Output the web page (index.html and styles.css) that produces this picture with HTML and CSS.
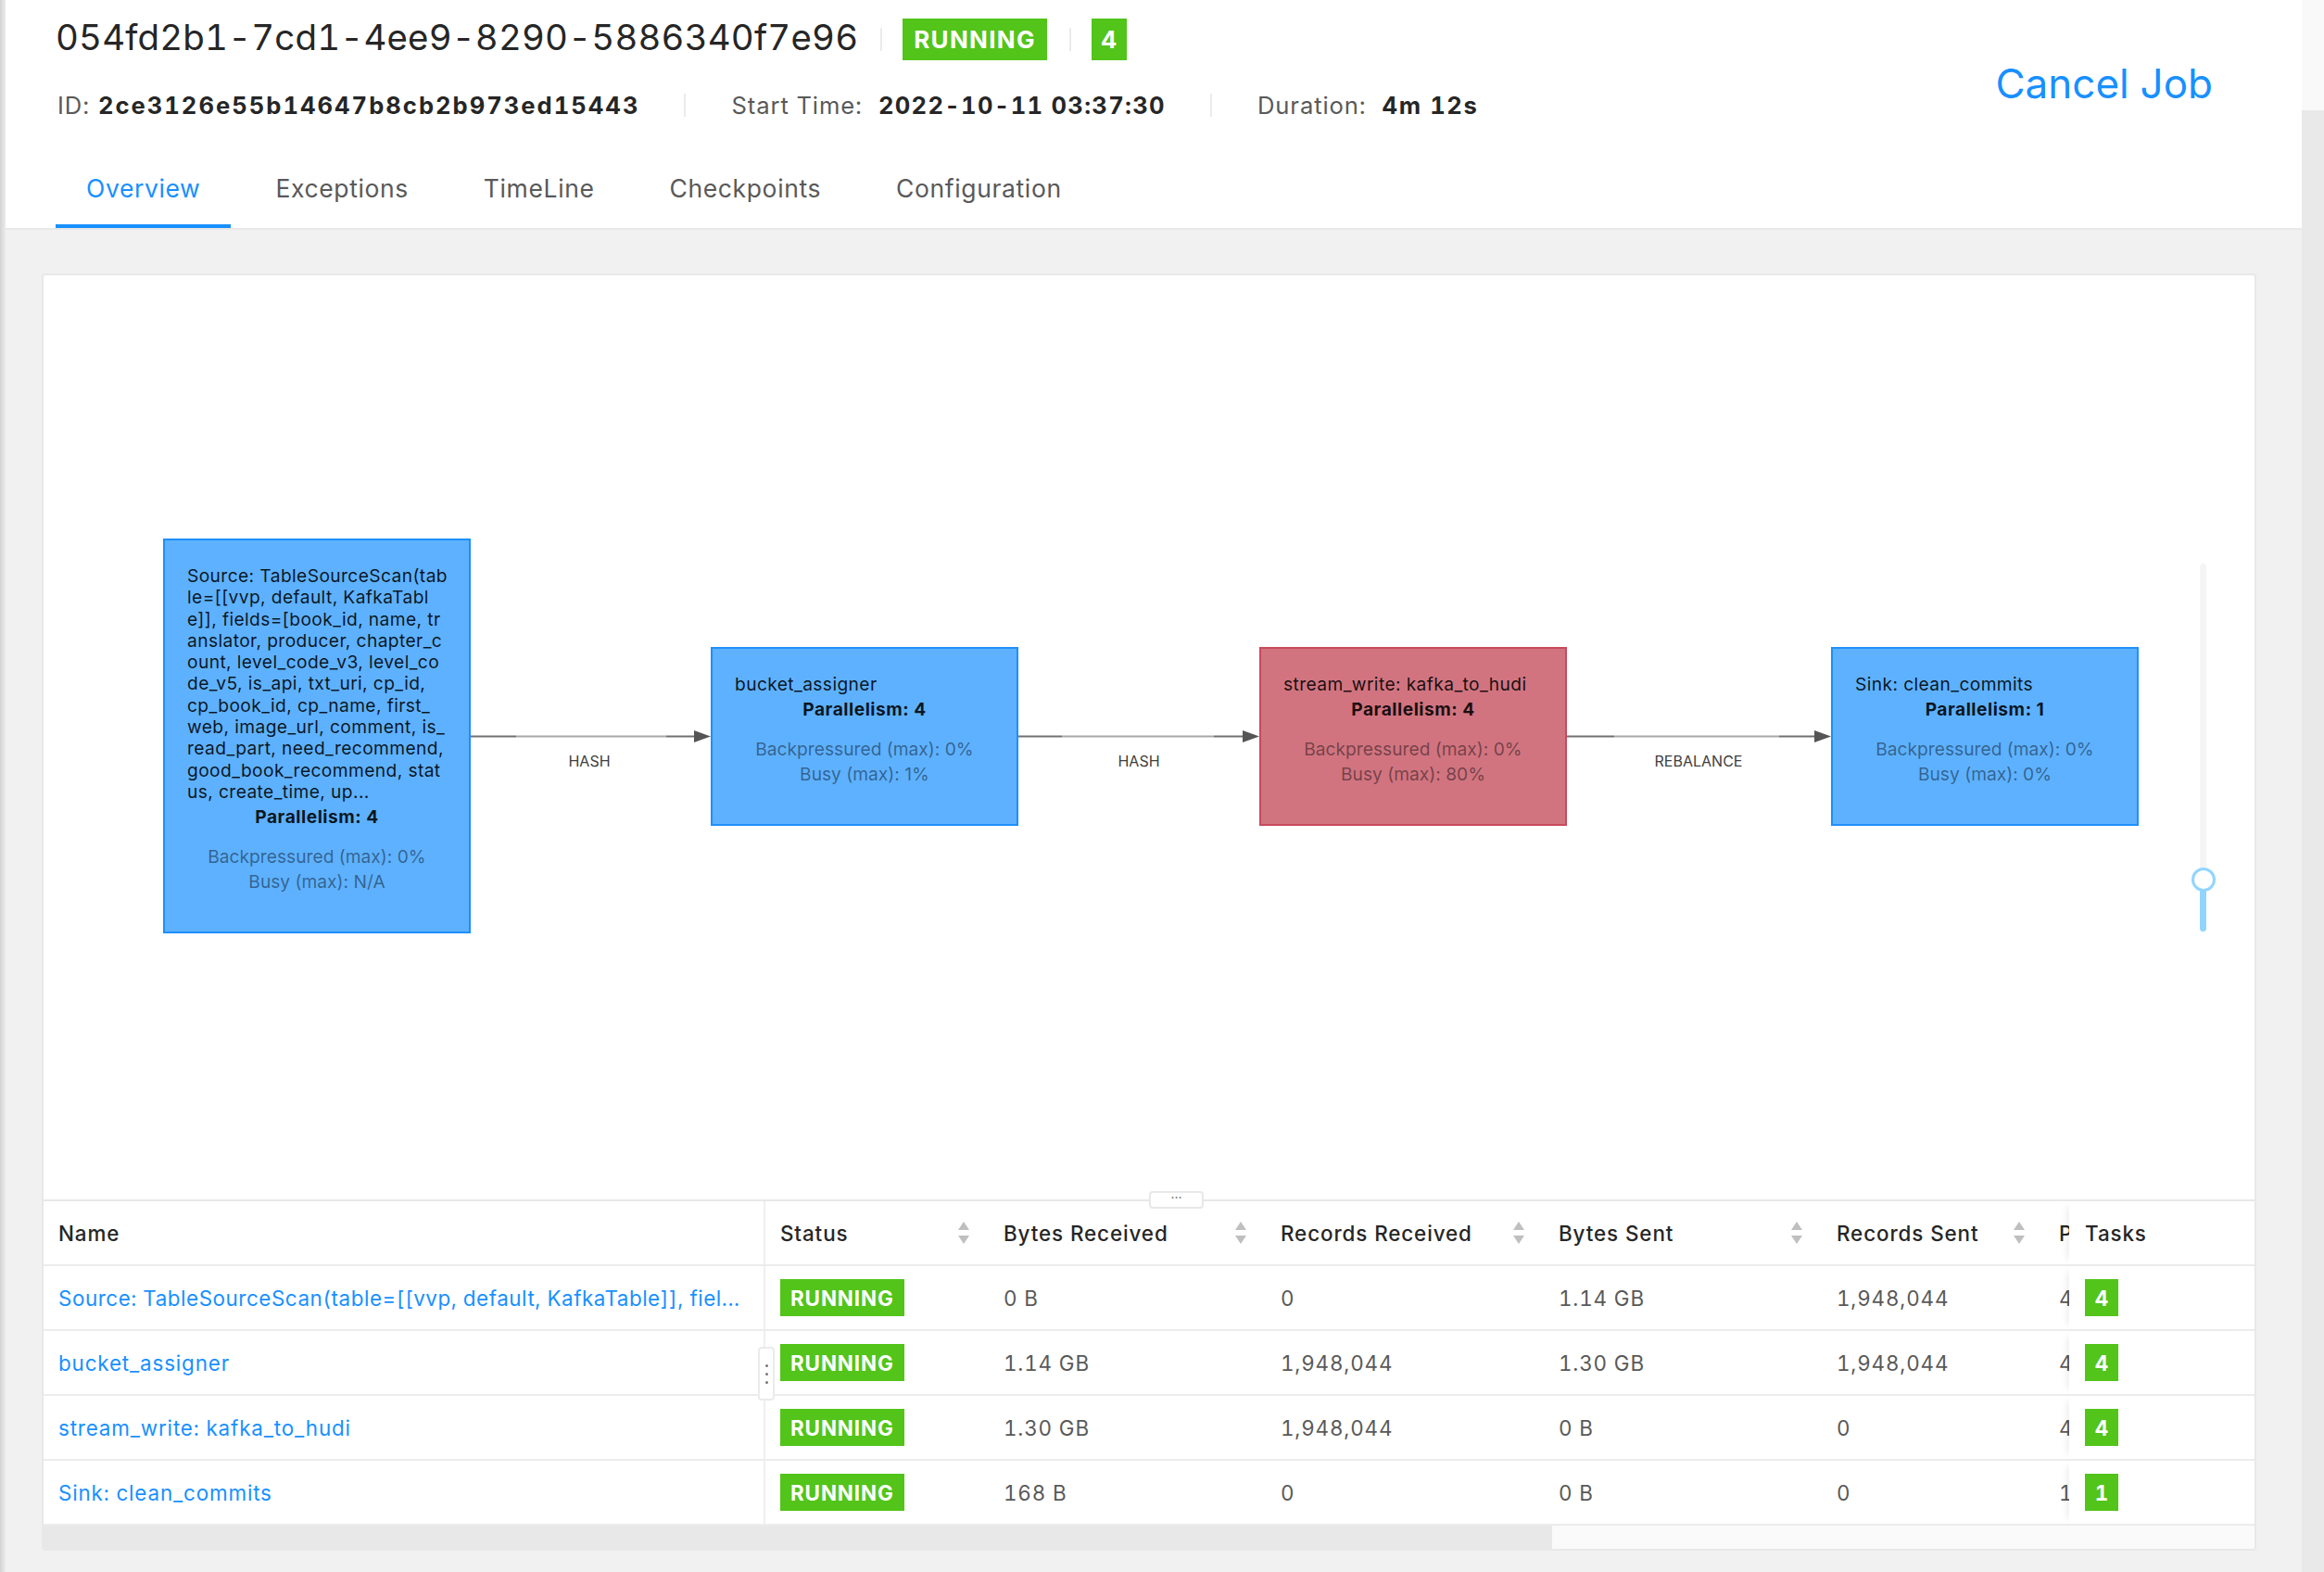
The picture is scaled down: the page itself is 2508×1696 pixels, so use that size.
FILE: index.html
```html
<!DOCTYPE html>
<html lang="en">
<head>
<meta charset="utf-8">
<title>Job Overview</title>
<link rel="stylesheet" href="styles.css">
</head>
<body>
<div class="page">
  <div class="sidebar-edge"></div>
  <div class="main">
    <header class="job-header">
      <div class="header-top">
        <div class="header-left">
          <div class="title-row">
            <h1 class="job-name">054fd2b1-7cd1-4ee9-8290-5886340f7e96</h1>
            <span class="vsep"></span>
            <span class="tag tag-lg">RUNNING</span>
            <span class="vsep"></span>
            <span class="tag tag-lg tag-num">4</span>
          </div>
          <div class="info-row">
            <span class="lbl">ID:</span><span class="val val-id">2ce3126e55b14647b8cb2b973ed15443</span>
            <span class="isep"></span>
            <span class="lbl">Start Time:</span><span class="val">2022-10-11 03:37:30</span>
            <span class="isep"></span>
            <span class="lbl">Duration:</span><span class="val val-dur">4m 12s</span>
          </div>
        </div>
        <a class="cancel">Cancel Job</a>
      </div>
      <nav class="tabs">
        <a class="tab active">Overview</a>
        <a class="tab">Exceptions</a>
        <a class="tab">TimeLine</a>
        <a class="tab">Checkpoints</a>
        <a class="tab">Configuration</a>
      </nav>
    </header>

    <section class="content">
      <div class="card">
        <div class="graph">
          <svg class="edges" width="2386" height="997" viewBox="0 0 2386 997">
            <g class="edge">
              <line x1="461" y1="497.5" x2="510" y2="497.5" class="e-dark"/>
              <line x1="510" y1="497.5" x2="672" y2="497.5" class="e-light"/>
              <line x1="672" y1="497.5" x2="704" y2="497.5" class="e-dark"/>
              <polygon points="702,491 720,497.5 702,504" class="e-arrow"/>
            </g>
            <g class="edge">
              <line x1="1052" y1="497.5" x2="1099" y2="497.5" class="e-dark"/>
              <line x1="1099" y1="497.5" x2="1263" y2="497.5" class="e-light"/>
              <line x1="1263" y1="497.5" x2="1296" y2="497.5" class="e-dark"/>
              <polygon points="1294,491 1312,497.5 1294,504" class="e-arrow"/>
            </g>
            <g class="edge">
              <line x1="1643" y1="497.5" x2="1695" y2="497.5" class="e-dark"/>
              <line x1="1695" y1="497.5" x2="1873" y2="497.5" class="e-light"/>
              <line x1="1873" y1="497.5" x2="1913" y2="497.5" class="e-dark"/>
              <polygon points="1911,491 1929,497.5 1911,504" class="e-arrow"/>
            </g>
            <text x="589" y="530" class="e-label">HASH</text>
            <text x="1182" y="530" class="e-label">HASH</text>
            <text x="1786" y="530" class="e-label">REBALANCE</text>
          </svg>

          <div class="node node-blue" style="left:129px;top:284px">
            <div class="node-title">
              <span>Source: TableSourceScan(tab</span>
              <span>le=[[vvp, default, KafkaTabl</span>
              <span>e]], fields=[book_id, name, tr</span>
              <span>anslator, producer, chapter_c</span>
              <span>ount, level_code_v3, level_co</span>
              <span>de_v5, is_api, txt_uri, cp_id,</span>
              <span>cp_book_id, cp_name, first_</span>
              <span>web, image_url, comment, is_</span>
              <span>read_part, need_recommend,</span>
              <span>good_book_recommend, stat</span>
              <span>us, create_time, up...</span>
            </div>
            <div class="node-par">Parallelism: 4</div>
            <div class="node-metrics">
              <span>Backpressured (max): 0%</span>
              <span>Busy (max): N/A</span>
            </div>
          </div>

          <div class="node node-blue" style="left:720px;top:401px">
            <div class="node-title"><span>bucket_assigner</span></div>
            <div class="node-par">Parallelism: 4</div>
            <div class="node-metrics">
              <span>Backpressured (max): 0%</span>
              <span>Busy (max): 1%</span>
            </div>
          </div>

          <div class="node node-red" style="left:1312px;top:401px">
            <div class="node-title"><span>stream_write: kafka_to_hudi</span></div>
            <div class="node-par">Parallelism: 4</div>
            <div class="node-metrics">
              <span>Backpressured (max): 0%</span>
              <span>Busy (max): 80%</span>
            </div>
          </div>

          <div class="node node-blue" style="left:1929px;top:401px">
            <div class="node-title"><span>Sink: clean_commits</span></div>
            <div class="node-par">Parallelism: 1</div>
            <div class="node-metrics">
              <span>Backpressured (max): 0%</span>
              <span>Busy (max): 0%</span>
            </div>
          </div>

          <div class="zoom-slider">
            <div class="zs-fill"></div>
            <div class="zs-handle"></div>
          </div>
        </div>

        <div class="vresizer">&middot;&middot;&middot;</div>

        <div class="table">
          <div class="trow thead">
            <div class="cell c-name">Name</div>
            <div class="cell sortable"><span>Status</span><svg class="sorter" width="12" height="24" viewBox="0 0 12 24"><polygon points="6,0 12,9 0,9"/><polygon points="0,15 12,15 6,24"/></svg></div>
            <div class="cell sortable"><span>Bytes Received</span><svg class="sorter" width="12" height="24" viewBox="0 0 12 24"><polygon points="6,0 12,9 0,9"/><polygon points="0,15 12,15 6,24"/></svg></div>
            <div class="cell sortable"><span>Records Received</span><svg class="sorter" width="12" height="24" viewBox="0 0 12 24"><polygon points="6,0 12,9 0,9"/><polygon points="0,15 12,15 6,24"/></svg></div>
            <div class="cell sortable"><span>Bytes Sent</span><svg class="sorter" width="12" height="24" viewBox="0 0 12 24"><polygon points="6,0 12,9 0,9"/><polygon points="0,15 12,15 6,24"/></svg></div>
            <div class="cell sortable"><span>Records Sent</span><svg class="sorter" width="12" height="24" viewBox="0 0 12 24"><polygon points="6,0 12,9 0,9"/><polygon points="0,15 12,15 6,24"/></svg></div>
            <div class="cell c-par">P</div>
            <div class="cell c-tasks">Tasks</div>
          </div>
          <div class="trow">
            <div class="cell c-name"><a class="op-link op-link-long">Source: TableSourceScan(table=[[vvp, default, KafkaTable]], fiel...</a></div>
            <div class="cell"><span class="tag">RUNNING</span></div>
            <div class="cell">0 B</div>
            <div class="cell">0</div>
            <div class="cell">1.14 GB</div>
            <div class="cell">1,948,044</div>
            <div class="cell c-par">4</div>
            <div class="cell c-tasks"><span class="tag tag-num">4</span></div>
          </div>
          <div class="trow">
            <div class="cell c-name"><a class="op-link">bucket_assigner</a></div>
            <div class="cell"><span class="tag">RUNNING</span></div>
            <div class="cell">1.14 GB</div>
            <div class="cell">1,948,044</div>
            <div class="cell">1.30 GB</div>
            <div class="cell">1,948,044</div>
            <div class="cell c-par">4</div>
            <div class="cell c-tasks"><span class="tag tag-num">4</span></div>
          </div>
          <div class="trow">
            <div class="cell c-name"><a class="op-link">stream_write: kafka_to_hudi</a></div>
            <div class="cell"><span class="tag">RUNNING</span></div>
            <div class="cell">1.30 GB</div>
            <div class="cell">1,948,044</div>
            <div class="cell">0 B</div>
            <div class="cell">0</div>
            <div class="cell c-par">4</div>
            <div class="cell c-tasks"><span class="tag tag-num">4</span></div>
          </div>
          <div class="trow">
            <div class="cell c-name"><a class="op-link">Sink: clean_commits</a></div>
            <div class="cell"><span class="tag">RUNNING</span></div>
            <div class="cell">168 B</div>
            <div class="cell">0</div>
            <div class="cell">0 B</div>
            <div class="cell">0</div>
            <div class="cell c-par">1</div>
            <div class="cell c-tasks"><span class="tag tag-num">1</span></div>
          </div>
          <div class="col-resizer"><i></i><i></i><i></i></div>
        </div>
        <div class="hscroll"><div class="hthumb"></div></div>
      </div>
    </section>
  </div>
  <div class="vscroll"><div class="vs-top"></div></div>
</div>
</body>
</html>
```

FILE: styles.css
```css
* { box-sizing: border-box; }

html, body {
  margin: 0;
  padding: 0;
  background: #f1f1f1;
}

body {
  font-family: Inter, "Noto Sans", "Liberation Sans", sans-serif;
  color: rgba(0, 0, 0, 0.65);
  font-variant-numeric: tabular-nums;
}

.page {
  display: flex;
  width: 2508px;
  height: 1696px;
  overflow: hidden;
  position: relative;
}

.sidebar-edge {
  position: absolute;
  left: 0;
  top: 0;
  width: 6px;
  height: 100%;
  background: linear-gradient(to right, #d3d3d3, #ececec);
  z-index: 5;
}

.main {
  flex: 1;
  display: flex;
  flex-direction: column;
  min-width: 0;
}

/* ---------- header ---------- */
.job-header {
  background: #fff;
  border-bottom: 2px solid #e8e8e8;
  padding-left: 60px;
}

.header-top {
  display: flex;
  justify-content: space-between;
  align-items: flex-start;
}

.title-row {
  display: flex;
  align-items: center;
  margin-top: 20px;
  height: 45px;
}

.job-name {
  margin: 0 0 6px 0;
  font-size: 38.4px;
  font-weight: 400;
  line-height: 46px;
  color: #262626;
  letter-spacing: 0.2px;
}

.vsep {
  width: 2px;
  height: 25px;
  background: #ebebeb;
  margin: 0 22px 0 24px;
}

.tag {
  display: inline-flex;
  align-items: center;
  justify-content: center;
  background: #52c41a;
  color: #fff;
  font-weight: 700;
  font-size: 22.4px;
  height: 40px;
  padding: 0 11px;
  letter-spacing: 0.9px;
}

.tag-lg {
  height: 45px;
  font-size: 26px;
  padding: 0 12px;
  letter-spacing: 1.3px;
}

.tag-num {
  padding: 0;
  width: 36px;
  letter-spacing: 0;
}

.tag-lg.tag-num { width: 38px; }

.info-row {
  display: flex;
  align-items: center;
  margin-top: 33px;
  height: 30px;
  font-size: 25.6px;
  white-space: nowrap;
}

.lbl {
  color: #595959;
  margin-left: 2px;
  letter-spacing: 0.9px;
}

.val {
  color: #262626;
  font-weight: 700;
  margin-left: 17px;
  letter-spacing: 1.3px;
}

.val-id {
  margin-left: 9px;
  letter-spacing: 2px;
}

.val-dur { letter-spacing: 1.6px; }

.isep {
  width: 2px;
  height: 25px;
  background: #ebebeb;
  margin: 0 47px 0 48px;
}

.cancel {
  margin-top: 63px;
  margin-right: 96px;
  font-size: 44px;
  line-height: 54px;
  color: #1890ff;
  cursor: pointer;
}

.tabs {
  display: flex;
  gap: 15px;
  margin-top: 32px;
}

.tab {
  padding: 28px 33px 24px;
  line-height: 30px;
  font-size: 26.5px;
  color: #595959;
  border-bottom: 4px solid transparent;
  white-space: nowrap;
  letter-spacing: 0.62px;
}

.tab.active {
  color: #1890ff;
  border-bottom-color: #1890ff;
}

/* ---------- content ---------- */
.content {
  flex: 1;
  padding: 47px 49px 0 45px;
}

.card {
  position: relative;
  background: #fff;
  border: 2px solid #e8e8e8;
  border-radius: 4px;
  overflow: hidden;
}

.graph {
  position: relative;
  height: 997px;
}

.edges {
  position: absolute;
  left: 0;
  top: 0;
}

.e-dark { stroke: #707070; stroke-width: 2; }
.e-light { stroke: #a8a8a8; stroke-width: 2; }
.e-arrow { fill: #555; }
.e-label {
  font-family: Inter, "Noto Sans", sans-serif;
  font-size: 16px;
  fill: #404040;
  text-anchor: middle;
}

.node {
  position: absolute;
  width: 332px;
  padding: 27px 0 40px;
  border: 2px solid #1890ff;
  font-size: 19.2px;
  font-variant-numeric: normal;
}

.node-blue {
  background: #5db1ff;
  border-color: #1f8ffb;
}

.node-red {
  background: #d17480;
  border-color: #c94a5b;
}

.node-title {
  padding: 0 0 0 24px;
  line-height: 23.3px;
  color: rgba(0, 0, 0, 0.88);
  white-space: nowrap;
  letter-spacing: 0.4px;
}

.node-title span { display: block; }

.node-par {
  margin-top: 3.4px;
  line-height: 23.3px;
  text-align: center;
  font-weight: 700;
  color: rgba(0, 0, 0, 0.88);
  letter-spacing: 0.5px;
}

.node-metrics {
  margin-top: 18px;
  line-height: 27px;
  text-align: center;
  color: rgba(0, 0, 0, 0.45);
}

.node-metrics span { display: block; }

.zoom-slider {
  position: absolute;
  left: 2327px;
  top: 311px;
  width: 7px;
  height: 397px;
  background: #f5f5f5;
  border-radius: 4px;
}

.zs-fill {
  position: absolute;
  left: 0;
  bottom: 0;
  width: 7px;
  height: 57px;
  background: #91d5ff;
  border-radius: 4px;
}

.zs-handle {
  position: absolute;
  left: -9.5px;
  top: 328px;
  width: 26px;
  height: 26px;
  border-radius: 50%;
  border: 3px solid #91d5ff;
  background: #fff;
}

.vresizer {
  position: absolute;
  left: 1193px;
  top: 988px;
  width: 59px;
  height: 19px;
  background: #fff;
  border: 2px solid #e8e8e8;
  border-radius: 4px;
  font-size: 14px;
  line-height: 10px;
  text-align: center;
  color: #666;
  z-index: 3;
}

/* ---------- table ---------- */
.table {
  position: relative;
  border-top: 2px solid #e8e8e8;
  font-size: 22.4px;
  letter-spacing: 0.85px;
}

.trow {
  display: grid;
  grid-template-columns: 779px 241px 299px 300px 300px 240px 27px 200px;
  height: 70px;
  border-bottom: 2px solid #ececec;
}

.trow:last-of-type { border-bottom: none; height: 68px; }

.cell {
  display: flex;
  align-items: center;
  padding: 0 16px;
  overflow: hidden;
  white-space: nowrap;
  color: #595959;
  background: #fff;
}

.thead .cell {
  color: #262626;
  font-weight: 500;
  letter-spacing: 0.9px;
}

.sortable {
  justify-content: space-between;
  padding-right: 21px;
}

.sorter polygon { fill: #bfbfbf; }

.c-name {
  border-right: 2px solid #f0f0f0;
}

.op-link {
  color: #1890ff;
  overflow: hidden;
  text-overflow: ellipsis;
  white-space: nowrap;
  display: block;
  max-width: 100%;
}

.op-link-long { letter-spacing: 0.55px; }

.c-par {
  padding-right: 0;
}

.c-tasks {
  padding-left: 17px;
  box-shadow: -8px 0 8px -6px rgba(0, 0, 0, 0.08);
  position: relative;
  z-index: 1;
}

.col-resizer {
  position: absolute;
  left: 771px;
  top: 157px;
  width: 18px;
  height: 58px;
  background: #fff;
  border: 2px solid #ebebeb;
  border-radius: 4px;
  display: flex;
  flex-direction: column;
  align-items: center;
  justify-content: center;
  gap: 6px;
  z-index: 2;
}

.col-resizer i {
  width: 3px;
  height: 3px;
  border-radius: 50%;
  background: #777;
}

.hscroll {
  height: 25px;
  background: #fafafa;
}

.hthumb {
  width: 1628px;
  height: 25px;
  background: #e8e8e8;
}

/* ---------- right scrollbar ---------- */
.vscroll {
  width: 24px;
  background: #e9e9e9;
}

.vs-top {
  height: 119px;
  background: #f9f9f9;
}
```
